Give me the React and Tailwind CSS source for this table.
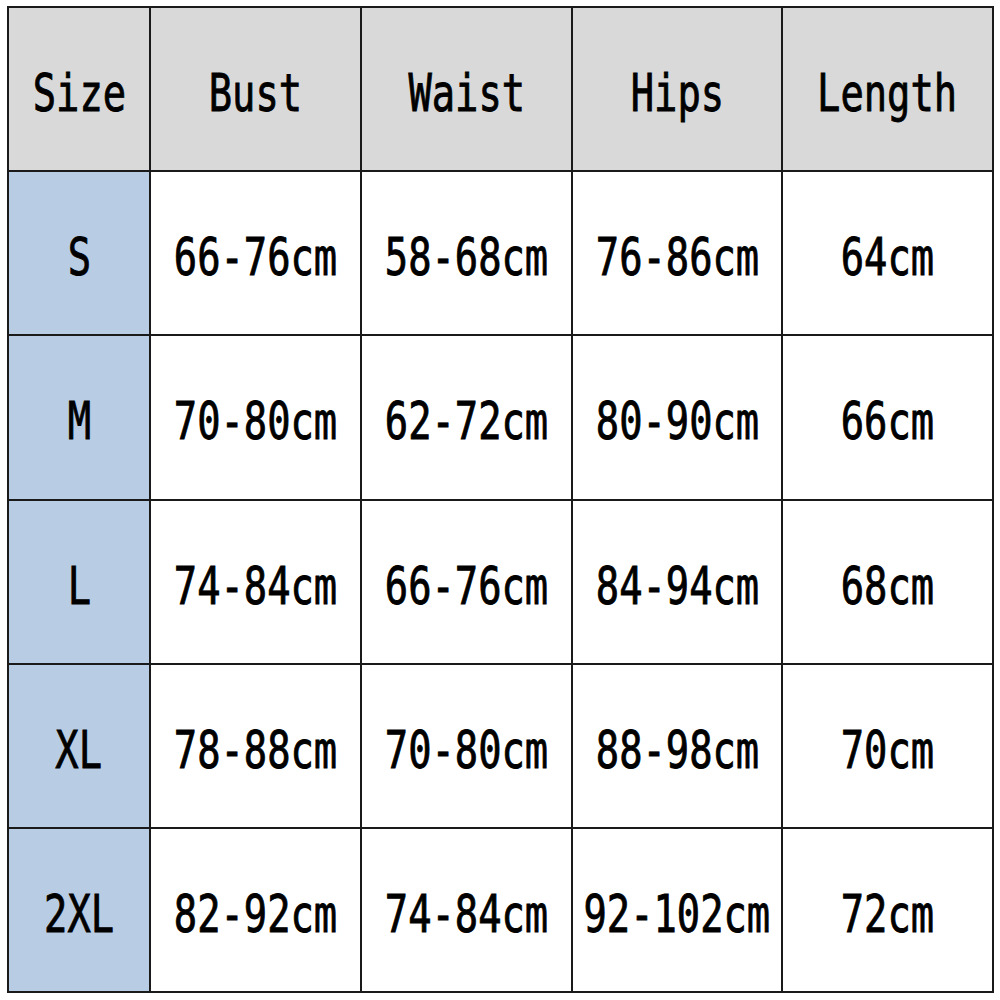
import React from 'react';

const headers = ['Size', 'Bust', 'Waist', 'Hips', 'Length'];

const rows = [
    ['S', '66-76cm', '58-68cm', '76-86cm', '64cm'],
    ['M', '70-80cm', '62-72cm', '80-90cm', '66cm'],
    ['L', '74-84cm', '66-76cm', '84-94cm', '68cm'],
    ['XL', '78-88cm', '70-80cm', '88-98cm', '70cm'],
    ['2XL', '82-92cm', '74-84cm', '92-102cm', '72cm'],
];

const Cell = ({ children, className }) => (
    <div className={`flex items-center justify-center pt-[8px] ${className}`}>
        <span className="inline-block scale-x-[0.76] text-[51px] leading-none text-black whitespace-nowrap [-webkit-text-stroke:0.9px_black]">
            {children}
        </span>
    </div>
);

const App = () => {
    return (
        <div className="w-[1000px] h-[1000px] bg-white pt-[6px] pl-[7px] font-['DejaVu_Sans_Mono',monospace]">
            <div className="grid grid-cols-[140px_209px_209px_208px_209px] grid-rows-[162px_162px_163px_162px_162px_162px] gap-[2px] p-[2px] bg-[#1a1a1a] w-max">
                {headers.map(h => (
                    <Cell key={h} className="bg-[#d9d9d9]">{h}</Cell>
                ))}
                {rows.map(r => (
                    <React.Fragment key={r[0]}>
                        <Cell className="bg-[#b8cce4]">{r[0]}</Cell>
                        {r.slice(1).map((v, i) => (
                            <Cell key={i} className="bg-white">{v}</Cell>
                        ))}
                    </React.Fragment>
                ))}
            </div>
        </div>
    );
};

export default App;
